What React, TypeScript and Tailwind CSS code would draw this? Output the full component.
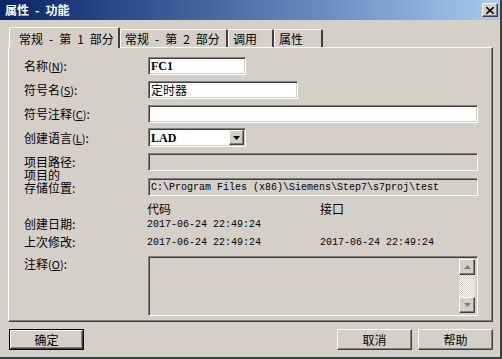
import React from 'react';

const cjk = { fontFamily: '"Noto Sans CJK SC", "Liberation Sans", sans-serif' };
const mono = { fontFamily: '"Liberation Mono", "Noto Sans CJK SC", monospace' };

const sunken =
  'border border-t-[#808080] border-l-[#808080] border-b-white border-r-white shadow-[inset_1px_1px_0_#404040,inset_-1px_-1px_0_#d4d0c8]';
const raised =
  'border border-t-white border-l-white border-b-[#404040] border-r-[#404040] shadow-[inset_-1px_-1px_0_#808080]';

function Key({ k }: { k: string }) {
  return (
    <span className="text-[11px]">
      (<span className="underline">{k}</span>)
    </span>
  );
}

function Row({ label, children, className = '' }: { label: React.ReactNode; children?: React.ReactNode; className?: string }) {
  return (
    <div className={`flex items-center ${className}`}>
      <div className="w-[139px] pl-[15px] text-[12px] leading-[12px] text-black">{label}</div>
      {children}
    </div>
  );
}

function Arrow({ dir, color = '#000' }: { dir: 'up' | 'down'; color?: string }) {
  return (
    <svg width="7" height="4" viewBox="0 0 7 4">
      {dir === 'down' ? <path d="M0 0h7L3.5 4z" fill={color} /> : <path d="M0 4h7L3.5 0z" fill={color} />}
    </svg>
  );
}

function Tab({ label, active, w }: { label: string; active?: boolean; w: string }) {
  return (
    <div
      className={`${w} flex items-center border-l border-t border-t-white border-l-white border-r-2 border-r-[#404040] rounded-tl-[2px] rounded-tr-[2px] text-[12px] text-black whitespace-pre ${
        active ? 'h-[21px] relative z-10 bg-[#d4d0c8] pl-[9px] -mb-[1px]' : 'h-[18px] pl-[4px]'
      }`}
    >
      <span className="mt-[1px]">{label}</span>
    </div>
  );
}

export default function App() {
  return (
    <div className="w-[502px] h-[359px] bg-[#d4d0c8] border-r-2 border-b-2 border-r-[#404040] border-b-[#404040] overflow-hidden" style={cjk}>
      {/* title bar */}
      <div className="h-[20px] flex items-center bg-gradient-to-r from-[#0a246a] to-[#a6caf0] pl-[5px] pr-[2px]">
        <span className="text-white font-bold text-[12px] whitespace-pre">属性{'\u2002-\u2002'}功能</span>
        <div className={`ml-auto w-[16px] h-[14px] bg-[#d4d0c8] flex items-center justify-center ${raised}`}>
          <svg width="8" height="7" viewBox="0 0 8 7">
            <path d="M0 0L8 7M8 0L0 7" stroke="#000" strokeWidth="1.6" />
          </svg>
        </div>
      </div>

      <div className="pl-[8px] pr-[7px]">
        {/* tabs */}
        <div className="mt-[7px] h-[20px] flex items-end pl-[1px]">
          <Tab label={'常规\u2002-\u2002第\u20021\u2002部分'} active w="w-[111px]" />
          <Tab label={'常规\u2002-\u2002第\u20022\u2002部分'} w="w-[108px]" />
          <Tab label="调用" w="w-[46px]" />
          <Tab label="属性" w="w-[49px]" />
        </div>

        {/* panel */}
        <div className="h-[275px] border border-t-white border-l-white border-b-[#404040] border-r-[#404040] shadow-[inset_-1px_-1px_0_#808080] pt-[9px]">
          <Row label={<>名称<Key k="N" />:</>}>
            <div className={`w-[98px] h-[18px] bg-white ${sunken} flex items-center pl-[2px] text-[12px] font-bold`} style={{ fontFamily: '"Liberation Serif", serif' }}>
              FC1
            </div>
          </Row>
          <Row className="mt-[6px]" label={<>符号名<Key k="S" />:</>}>
            <div className={`w-[150px] h-[18px] bg-white ${sunken} flex items-center pl-[2px] text-[12px]`}>定时器</div>
          </Row>
          <Row className="mt-[6px]" label={<>符号注释<Key k="C" />:</>}>
            <div className={`w-[330px] h-[18px] bg-white ${sunken}`} />
          </Row>
          <Row className="mt-[5px]" label={<>创建语言<Key k="L" />:</>}>
            <div className={`w-[98px] h-[19px] bg-white ${sunken} flex items-center pl-[2px] pr-[1px]`}>
              <span className="text-[12px] font-bold" style={{ fontFamily: '"Liberation Serif", serif' }}>LAD</span>
              <div className={`ml-auto w-[15px] h-[15px] bg-[#d4d0c8] flex items-center justify-center ${raised}`}>
                <Arrow dir="down" />
              </div>
            </div>
          </Row>
          <Row className="mt-[6px]" label="项目路径:">
            <div className={`w-[330px] h-[18px] ${sunken}`} />
          </Row>
          <Row
            className="mt-[6px] items-end"
            label={
              <div className="-mt-[8px] mb-[2px]">
                <div className="leading-[12px]">项目的</div>
                <div className="leading-[12px] mt-[1px]">存储位置:</div>
              </div>
            }
          >
            <div className={`w-[330px] h-[18px] ${sunken} flex items-center pl-[2px] text-[10px] text-black`} style={mono}>
              C:\Program Files (x86)\Siemens\Step7\s7proj\test
            </div>
          </Row>

          <div className="mt-[6px] h-[14px] flex items-center text-[12px]">
            <div className="w-[138px]" />
            <div className="w-[173px]">代码</div>
            <div>接口</div>
          </div>
          <div className="mt-[1px] h-[14px] flex items-center">
            <div className="w-[138px] pl-[15px] text-[12px]">创建日期:</div>
            <div className="w-[173px] text-[10px]" style={mono}>2017-06-24 22:49:24</div>
          </div>
          <div className="mt-[4px] h-[14px] flex items-center">
            <div className="w-[138px] pl-[15px] text-[12px]">上次修改:</div>
            <div className="w-[173px] text-[10px]" style={mono}>2017-06-24 22:49:24</div>
            <div className="text-[10px]" style={mono}>2017-06-24 22:49:24</div>
          </div>

          <div className="mt-[7px] flex items-start">
            <div className="w-[139px] pl-[15px] text-[12px] leading-[14px] pt-[1px]">注释<Key k="O" />:</div>
            <div className={`w-[330px] h-[60px] ${sunken} flex justify-end p-[2px]`}>
              <div className="w-[16px] flex flex-col">
                <div className={`h-[16px] bg-[#d4d0c8] flex items-center justify-center ${raised}`}>
                  <Arrow dir="up" color="#808080" />
                </div>
                <div className="flex-1 bg-[repeating-conic-gradient(#ffffff_0_25%,#d4d0c8_0_50%)] bg-[length:2px_2px]" />
                <div className={`h-[16px] bg-[#d4d0c8] flex items-center justify-center ${raised}`}>
                  <Arrow dir="down" color="#808080" />
                </div>
              </div>
            </div>
          </div>
        </div>

        {/* buttons */}
        <div className="mt-[7px] flex items-center text-[12px]">
          <div className="ml-[1px] w-[75px] h-[21px] border border-black">
            <div className={`h-full flex items-center justify-center ${raised}`}>确定</div>
          </div>
          <div className={`ml-auto w-[75px] h-[21px] flex items-center justify-center ${raised}`}>取消</div>
          <div className={`ml-[6px] w-[75px] h-[21px] flex items-center justify-center ${raised}`}>帮助</div>
        </div>
      </div>
    </div>
  );
}
